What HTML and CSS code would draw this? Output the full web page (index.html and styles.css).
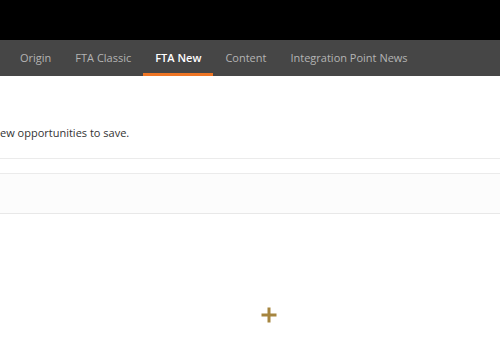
FILE: index.html
```html
<!DOCTYPE html>
<html lang="en">
<head>
  <meta charset="UTF-8">
  <title>FTA New</title>
  <link rel="stylesheet" href="styles.css">
</head>
<body>
  <div class="topbar"></div>
  <nav class="tabs">
    <a class="tab">Origin</a>
    <a class="tab">FTA Classic</a>
    <a class="tab active">FTA New</a>
    <a class="tab">Content</a>
    <a class="tab">Integration Point News</a>
  </nav>

  <main class="content">
    <p class="intro">ew opportunities to save.</p>
    <div class="row thin"></div>
    <div class="row panel"></div>
    <div class="add">
      <svg width="18" height="18" viewBox="0 0 18 18">
        <path d="M9 1.5v15M1.5 9h15" stroke="#a6853f" stroke-width="3"/>
      </svg>
    </div>
  </main>
</body>
</html>
```

FILE: styles.css
```css
body {
  margin: 0;
  font-family: "Open Sans", "Noto Sans", sans-serif;
  background: #ffffff;
  width: 500px;
  height: 361px;
  overflow: hidden;
}

.topbar {
  height: 40px;
  background: #000;
}

.tabs {
  height: 36px;
  background: #464646;
  display: flex;
  padding-left: 8px;
  box-sizing: border-box;
}

.tab {
  display: block;
  padding: 0 12px;
  line-height: 36px;
  font-size: 11px;
  color: #b4b4b4;
  box-sizing: border-box;
  height: 36px;
}

.tab.active {
  color: #fff;
  font-weight: 600;
  border-bottom: 3px solid #ee7524;
}

.content {
  padding-top: 49px;
}

.intro {
  margin: 0;
  font-size: 11px;
  color: #333;
  line-height: 16px;
}

.row {
  border-top: 1px solid #ebebeb;
}

.thin {
  margin-top: 17px;
  height: 14px;
}

.panel {
  height: 39px;
  background: #fcfcfc;
  border-bottom: 1px solid #e8e8e8;
}

.add {
  display: flex;
  justify-content: center;
  padding-top: 92px;
  padding-left: 38px;
}
```
